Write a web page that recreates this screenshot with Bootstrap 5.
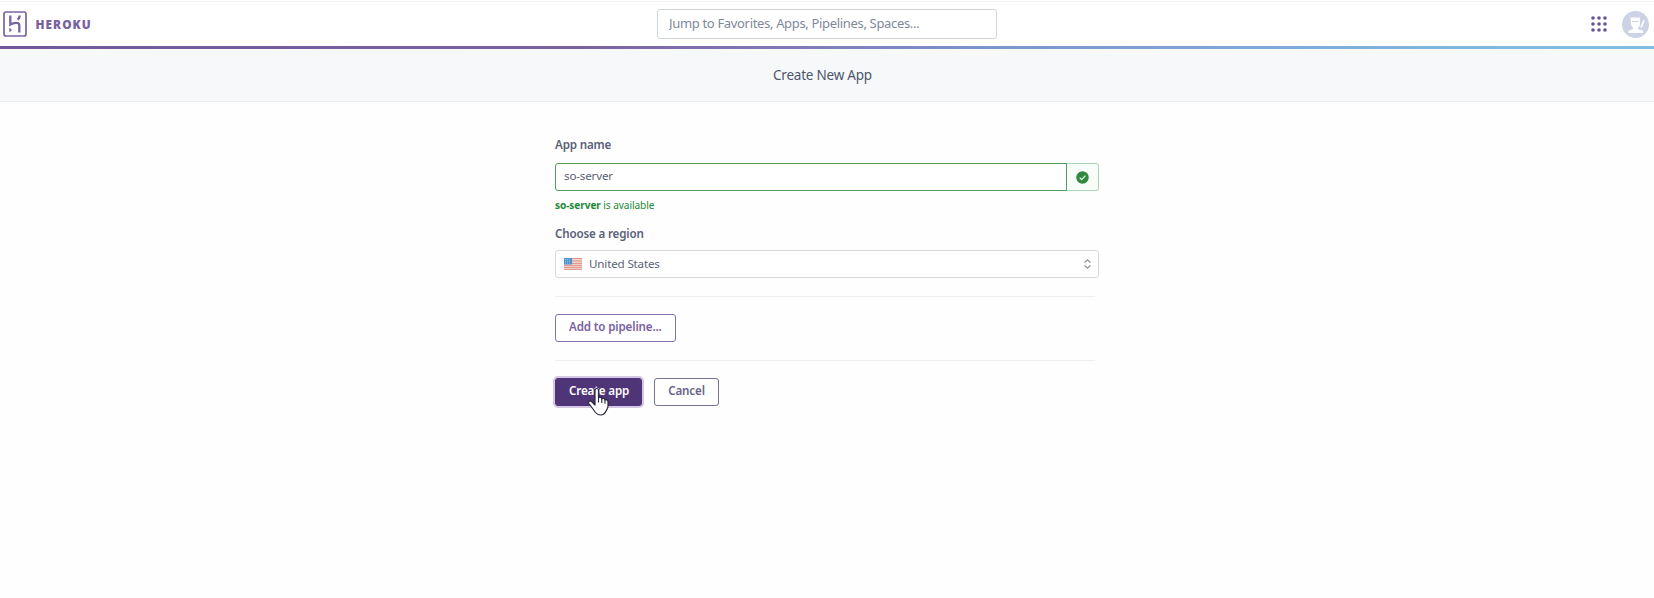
<!DOCTYPE html>
<html lang="en">
<head>
<meta charset="utf-8">
<meta name="viewport" content="width=device-width, initial-scale=1">
<title>Create New App | Heroku</title>
<link href="https://cdn.jsdelivr.net/npm/bootstrap@5.3.0/dist/css/bootstrap.min.css" rel="stylesheet">
<style>
body{font-family:"Noto Sans","Open Sans",sans-serif;font-size:11.6px;letter-spacing:-.16px;line-height:18px;color:#596981;background:#fefefe;min-height:100vh}
.topbar{border-top:1px solid #f3f3f3;margin-top:1px;height:45px;padding:0 5px;display:grid;grid-template-columns:1fr 340px 1fr;background:#fff}
.brand{margin-left:-2px}
.wordmark{font-family:"Open Sans",sans-serif;font-weight:800;font-size:11.8px;letter-spacing:1.05px;color:#79629f;margin-left:8.5px}
.search.form-control{height:30px;border:1px solid #cfd3dc;border-radius:3px;font-size:13px;padding:0 11px 2px;color:#7f889b;letter-spacing:-.33px;box-shadow:none}
.search::placeholder{color:#7f889b}
.apps{margin-right:14px}
.rule{height:3px;background:linear-gradient(90deg,#72589b 0%,#79639f 35%,#8175b2 46%,#7c96cb 60%,#7fb9e0 90%,#82bee2 100%)}
.subhead{height:53px;background:#f7f8fa;border-bottom:1px solid #ebedf1;font-size:13.5px;letter-spacing:-.22px;color:#4c566b;padding:0 9px 0 0}
.app-form{width:544px;margin-left:555px;padding-top:34px}
.app-form label{font-weight:600;display:block;color:#596079}
.field{height:28px;font-size:11.6px;letter-spacing:-.16px;border-radius:3px;color:#5b6275;padding:0 8px;box-shadow:none!important}
.field.valid{border:1px solid #4e9d5d;padding-bottom:3px}
.addon{width:33px;border:1px solid #acd3b6;border-left:0;border-radius:0 3px 3px 0;background:#f8fdf9;padding:0}
.help{color:#218838;font-size:10.1px;letter-spacing:-.08px;line-height:16px}
.region{border:1px solid #d5d8df;padding-right:7px}
.divider{height:1px;background:#eeeef1;width:540px}
.btn.act{display:block;height:28px;padding:0 13px 2px;border-radius:3px;font-size:11.6px;letter-spacing:-.14px;line-height:24px;font-weight:600;background:#fff;border:1px solid #8670a9;color:#79629f}
.btn.act.solid{background:#4f3578;border-color:#4f3578;color:#fff;box-shadow:0 0 0 2px #d5c6e4;padding-right:12px}
.btn.act.plain{border-color:#73748f;color:#68638a}
.pointer{position:absolute;left:32px;top:9px;z-index:2}
</style>
</head>
<body>
<header>
<nav class="topbar align-items-center">
  <div class="brand d-flex align-items-center">
    <svg width="24" height="26" viewBox="0 0 24 26" fill="none" stroke="#78649f"><rect x="1" y="1" width="22" height="24" rx="2" stroke-width="1.7"/><path d="M7.3 4.500v9c3-1.600 9-3 9 .7v7.300M16.800 4.500c-.2 1.800-1 3.200-2.200 4.200" stroke-width="2.300"/><path d="M6.300 16.500v5l2.700-2.500z" fill="#78649f" stroke="none"/></svg>
    <span class="wordmark">HEROKU</span>
  </div>
  <input class="form-control search" placeholder="Jump to Favorites, Apps, Pipelines, Spaces..." aria-label="Search">
  <div class="d-flex align-items-center justify-content-end">
    <svg class="apps" width="18" height="18" viewBox="0 0 18 18" fill="#66558d"><circle cx="3" cy="3" r="1.8"/><circle cx="9" cy="3" r="1.8"/><circle cx="15" cy="3" r="1.8"/><circle cx="3" cy="9" r="1.8"/><circle cx="9" cy="9" r="1.8"/><circle cx="15" cy="9" r="1.8"/><circle cx="3" cy="15" r="1.8"/><circle cx="9" cy="15" r="1.8"/><circle cx="15" cy="15" r="1.8"/></svg>
    <svg width="27" height="27" viewBox="0 0 27 27"><circle cx="13.500" cy="13.500" r="13.500" fill="#cdd3e4"/><path fill="#fff" d="M8.500 6.500h9.500v7q-.3 2.500-2 3.300v1.200l5 1.700v2.300H6.500v-2.300l4.500-1.700v-1.200Q9.200 15.500 9 13z"/><path d="M10 10.500h6.500" stroke="#cdd3e4" stroke-width="1"/><path d="m19 16.500 3-7" stroke="#fff" stroke-width="1.700"/></svg>
  </div>
</nav>
<div class="rule"></div>
<div class="subhead d-flex align-items-center justify-content-center">Create New App</div>
</header>
<main class="app-form">
  <label for="name">App name</label>
  <div class="input-group flex-nowrap" style="margin-top:9px">
    <input id="name" class="form-control field valid" value="so-server">
    <span class="input-group-text addon justify-content-center"><svg width="13" height="13" viewBox="0 0 13 13"><circle cx="6.500" cy="6.500" r="6.200" fill="#30883f"/><path d="m3.700 6.700 2 1.900 3.700-4" fill="none" stroke="#e5f5e7" stroke-width="1.300"/></svg></span>
  </div>
  <div class="help" style="margin-top:6px"><strong>so-server</strong> is available</div>
  <label style="margin-top:12px">Choose a region</label>
  <div class="field region d-flex align-items-center bg-white" style="margin-top:7px">
    <svg width="18" height="12" viewBox="0 0 18 12"><rect width="18" height="12" rx="1" fill="#faece8"/><path d="M0 .8h18M0 3h18M0 5.200h18M0 7.300h18M0 9.300h18M0 11.300h18" stroke="#d97d72" stroke-width="1.050"/><rect width="8" height="6.500" fill="#4d91cf"/><path d="M1 1.500h6M1 3.300h6M1 5h6" stroke="#b9d9ef" stroke-width=".7" stroke-dasharray="1"/></svg>
    <span class="flex-grow-1" style="margin-left:7px">United States</span>
    <svg width="7" height="10" viewBox="0 0 7 10" fill="none" stroke="#8f929a" stroke-width="1.200"><path d="M.6 3.500 3.500.9l2.900 2.600M.6 6.500l2.900 2.600 2.900-2.600"/></svg>
  </div>
  <div class="divider" style="margin-top:18px"></div>
  <button class="btn act" style="margin-top:17px">Add to pipeline...</button>
  <div class="divider" style="margin-top:18px"></div>
  <div class="d-flex" style="margin-top:17px;gap:12px">
    <div class="position-relative"><button class="btn act solid">Create app</button>
      <svg class="pointer" width="23" height="30" viewBox="0 0 23 30"><path d="M8 16V3.500C8 .8 11.500.8 11.500 3.500V11C12 9.700 14.600 9.800 14.800 12C15.500 10.800 18 11 18 13.200C19 12.200 21 12.800 21 14.800V19C21 22 19.500 23 18.500 25Q17 28 13.500 28Q10.500 28 8.500 25.500L4.500 20L1.800 16.500C.8 14.500 3 13 4.800 14.800L8 18Z" fill="#fff" stroke="#292538" stroke-width="1.200" stroke-linejoin="round"/><path d="M11.500 11v4.500M14.800 12v4M18 13.200v3.500" stroke="#292538" stroke-width="1.100"/></svg>
    </div>
    <button class="btn act plain">Cancel</button>
  </div>
</main>
<script src="https://cdn.jsdelivr.net/npm/bootstrap@5.3.0/dist/js/bootstrap.bundle.min.js"></script>
</body>
</html>
